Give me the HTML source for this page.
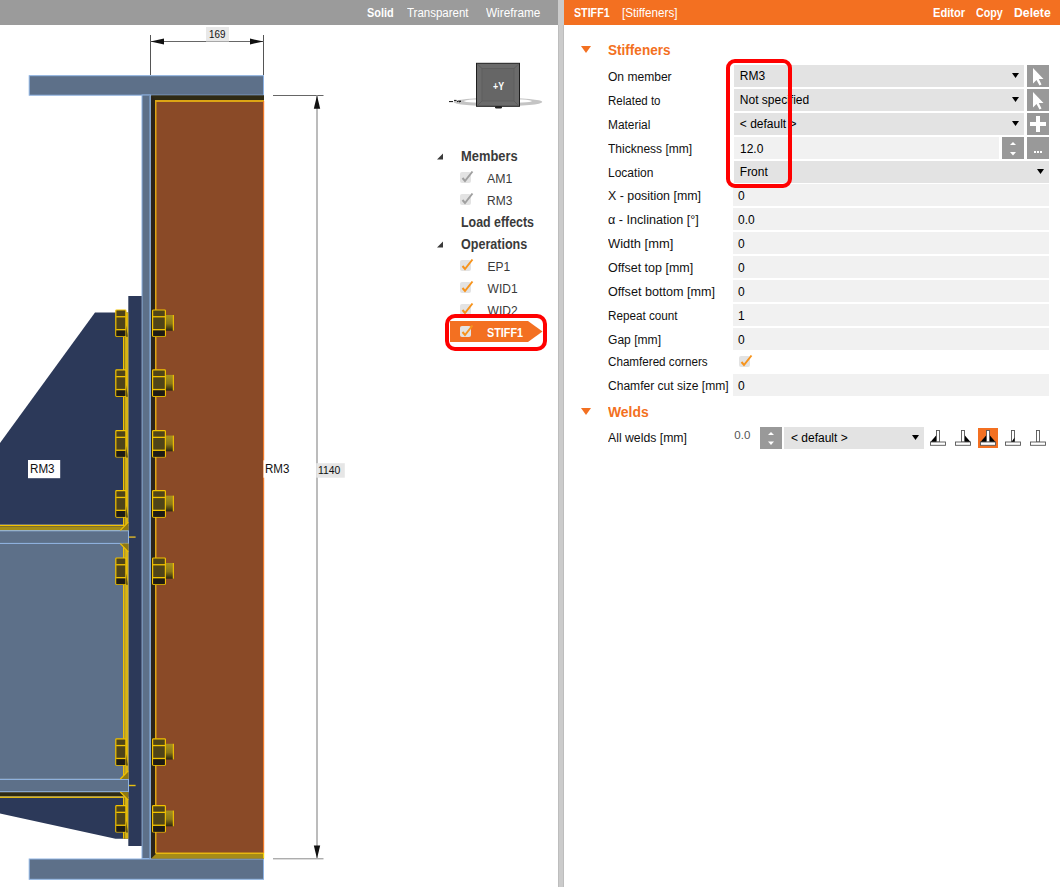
<!DOCTYPE html>
<html><head><meta charset="utf-8">
<style>
*{margin:0;padding:0;box-sizing:border-box}
html,body{width:1060px;height:887px;overflow:hidden;background:#fff;font-family:"Liberation Sans",sans-serif;position:relative}
.a{position:absolute;white-space:nowrap;line-height:1}
</style></head><body>
<svg class="a" style="left:0;top:0" width="558" height="887" viewBox="0 0 558 887"><defs><linearGradient id="shank" x1="0" y1="0" x2="0" y2="1"><stop offset="0" stop-color="#a89220"/><stop offset="0.55" stop-color="#8a7618"/><stop offset="1" stop-color="#2a2410"/></linearGradient></defs><rect x="29.2" y="75.7" width="234.3" height="19.5" fill="#5d7089" stroke="#8db2e2" stroke-width="1"/><rect x="29.2" y="859" width="234.3" height="20.3" fill="#5d7089" stroke="#8db2e2" stroke-width="1"/><rect x="151" y="95.5" width="113" height="763" fill="#2a2419"/><polygon points="151,95.5 264,95.5 264,100.2 156,100.2" fill="#2f2a14"/><rect x="155" y="100" width="109" height="753" fill="#dca514"/><rect x="156.5" y="102" width="107.5" height="750.7" fill="#8a4a27"/><rect x="263" y="101" width="1.2" height="752" fill="#f07a2a"/><polygon points="151.2,858.4 264,858.4 264,853.9 155.8,853.9" fill="#a58b18"/><rect x="155.5" y="852.7" width="108.5" height="1.3" fill="#e8b810"/><rect x="263" y="853" width="1.2" height="5.4" fill="#f5d000"/><rect x="142" y="95" width="8.3" height="763.5" fill="#5d7089" stroke="#8db2e2" stroke-width="1"/><rect x="149" y="95.5" width="1.5" height="763" fill="#7190b6"/><rect x="128.3" y="296" width="13.4" height="550" fill="#2c3959"/><polygon points="95,312.5 128.3,312.5 128.3,524.8 0,524.8 0,443" fill="#2c3959"/><rect x="0" y="526" width="128.3" height="4.5" fill="#a38c16"/><rect x="0" y="526" width="124" height="0.9" fill="#6b6236"/><rect x="0" y="524.9" width="124.3" height="1.2" fill="#f2c200"/><rect x="0" y="543.6" width="124" height="235.3" fill="#5d7089"/><rect x="-1" y="530.8" width="129.5" height="12.6" fill="#5d7089" stroke="#8db2e2" stroke-width="1"/><rect x="-1" y="779.4" width="129.5" height="12.4" fill="#5d7089" stroke="#8db2e2" stroke-width="1"/><polygon points="0,798 128.5,798 128.5,838.7 115.5,838.7 0,813.5" fill="#2c3959"/><rect x="0" y="792.2" width="128.3" height="4.4" fill="#2e2a14"/><rect x="0" y="796.6" width="124.3" height="1.4" fill="#e0b814"/><rect x="125" y="312.5" width="3.3" height="213.5" fill="#d9b514"/><rect x="124.2" y="312.5" width="0.9" height="213.5" fill="#7a6a20"/><rect x="123" y="312.5" width="1.3" height="213.5" fill="#f2c200"/><rect x="125" y="543.6" width="3.3" height="235.29999999999995" fill="#d9b514"/><rect x="124.2" y="543.6" width="0.9" height="235.29999999999995" fill="#7a6a20"/><rect x="123" y="543.6" width="1.3" height="235.29999999999995" fill="#f2c200"/><rect x="125" y="797" width="3.3" height="41.700000000000045" fill="#d9b514"/><rect x="124.2" y="797" width="0.9" height="41.700000000000045" fill="#7a6a20"/><rect x="123" y="797" width="1.3" height="41.700000000000045" fill="#f2c200"/><polygon points="120,530.3 128.3,530.3 128.3,522.0999999999999" fill="#8f7812"/><line x1="120.3" y1="530.3" x2="128.3" y2="522.0999999999999" stroke="#f2c200" stroke-width="1.2"/><polygon points="120,543.6 128.3,543.6 128.3,551.8000000000001" fill="#8f7812"/><line x1="120.3" y1="543.6" x2="128.3" y2="551.8000000000001" stroke="#f2c200" stroke-width="1.2"/><polygon points="120,779 128.3,779 128.3,770.8" fill="#8f7812"/><line x1="120.3" y1="779" x2="128.3" y2="770.8" stroke="#f2c200" stroke-width="1.2"/><polygon points="120,792 128.3,792 128.3,800.2" fill="#8f7812"/><line x1="120.3" y1="792" x2="128.3" y2="800.2" stroke="#f2c200" stroke-width="1.2"/><rect x="129" y="536.3" width="6.6" height="1.6" fill="#c8a830"/><rect x="129" y="784.8" width="6.6" height="1.4" fill="#e8c010"/><rect x="115.8" y="310.0" width="10.100000000000001" height="26.4" rx="0.8" fill="#4f4418" stroke="#f2c200" stroke-width="1.2"/><rect x="116.4" y="330.29999999999995" width="8.9" height="5.9" fill="#1d1b15"/><rect x="116.2" y="316.09999999999997" width="9.3" height="1.3" fill="#f2c200"/><rect x="116.2" y="329.0" width="9.3" height="1.3" fill="#f2c200"/><rect x="152.6" y="310.0" width="12.8" height="26.4" rx="0.8" fill="#4f4418" stroke="#f2c200" stroke-width="1.2"/><rect x="153.2" y="330.29999999999995" width="11.6" height="5.9" fill="#1d1b15"/><rect x="153" y="316.09999999999997" width="12" height="1.3" fill="#f2c200"/><rect x="153" y="329.0" width="12" height="1.3" fill="#f2c200"/><rect x="165.9" y="315.0" width="7.7" height="15.7" fill="url(#shank)"/><rect x="172.8" y="315.0" width="1.1" height="15.7" fill="#f2c200"/><polygon points="126.4,325.4 127.6,336.79999999999995 126.4,336.79999999999995" fill="#1d1b15"/><rect x="115.8" y="369.90000000000003" width="10.100000000000001" height="26.4" rx="0.8" fill="#4f4418" stroke="#f2c200" stroke-width="1.2"/><rect x="116.4" y="390.2" width="8.9" height="5.9" fill="#1d1b15"/><rect x="116.2" y="376.0" width="9.3" height="1.3" fill="#f2c200"/><rect x="116.2" y="388.90000000000003" width="9.3" height="1.3" fill="#f2c200"/><rect x="152.6" y="369.90000000000003" width="12.8" height="26.4" rx="0.8" fill="#4f4418" stroke="#f2c200" stroke-width="1.2"/><rect x="153.2" y="390.2" width="11.6" height="5.9" fill="#1d1b15"/><rect x="153" y="376.0" width="12" height="1.3" fill="#f2c200"/><rect x="153" y="388.90000000000003" width="12" height="1.3" fill="#f2c200"/><rect x="165.9" y="374.90000000000003" width="7.7" height="15.7" fill="url(#shank)"/><rect x="172.8" y="374.90000000000003" width="1.1" height="15.7" fill="#f2c200"/><polygon points="126.4,385.3 127.6,396.7 126.4,396.7" fill="#1d1b15"/><rect x="115.8" y="430.6" width="10.100000000000001" height="26.4" rx="0.8" fill="#4f4418" stroke="#f2c200" stroke-width="1.2"/><rect x="116.4" y="450.9" width="8.9" height="5.9" fill="#1d1b15"/><rect x="116.2" y="436.7" width="9.3" height="1.3" fill="#f2c200"/><rect x="116.2" y="449.6" width="9.3" height="1.3" fill="#f2c200"/><rect x="152.6" y="430.6" width="12.8" height="26.4" rx="0.8" fill="#4f4418" stroke="#f2c200" stroke-width="1.2"/><rect x="153.2" y="450.9" width="11.6" height="5.9" fill="#1d1b15"/><rect x="153" y="436.7" width="12" height="1.3" fill="#f2c200"/><rect x="153" y="449.6" width="12" height="1.3" fill="#f2c200"/><rect x="165.9" y="435.6" width="7.7" height="15.7" fill="url(#shank)"/><rect x="172.8" y="435.6" width="1.1" height="15.7" fill="#f2c200"/><polygon points="126.4,446 127.6,457.4 126.4,457.4" fill="#1d1b15"/><rect x="115.8" y="490.70000000000005" width="10.100000000000001" height="26.4" rx="0.8" fill="#4f4418" stroke="#f2c200" stroke-width="1.2"/><rect x="116.4" y="511.0" width="8.9" height="5.9" fill="#1d1b15"/><rect x="116.2" y="496.8" width="9.3" height="1.3" fill="#f2c200"/><rect x="116.2" y="509.70000000000005" width="9.3" height="1.3" fill="#f2c200"/><rect x="152.6" y="490.70000000000005" width="12.8" height="26.4" rx="0.8" fill="#4f4418" stroke="#f2c200" stroke-width="1.2"/><rect x="153.2" y="511.0" width="11.6" height="5.9" fill="#1d1b15"/><rect x="153" y="496.8" width="12" height="1.3" fill="#f2c200"/><rect x="153" y="509.70000000000005" width="12" height="1.3" fill="#f2c200"/><rect x="165.9" y="495.70000000000005" width="7.7" height="15.7" fill="url(#shank)"/><rect x="172.8" y="495.70000000000005" width="1.1" height="15.7" fill="#f2c200"/><polygon points="126.4,506.1 127.6,517.5 126.4,517.5" fill="#1d1b15"/><rect x="115.8" y="558.0" width="10.100000000000001" height="26.4" rx="0.8" fill="#4f4418" stroke="#f2c200" stroke-width="1.2"/><rect x="116.4" y="578.3" width="8.9" height="5.9" fill="#1d1b15"/><rect x="116.2" y="564.1" width="9.3" height="1.3" fill="#f2c200"/><rect x="116.2" y="577.0" width="9.3" height="1.3" fill="#f2c200"/><rect x="152.6" y="558.0" width="12.8" height="26.4" rx="0.8" fill="#4f4418" stroke="#f2c200" stroke-width="1.2"/><rect x="153.2" y="578.3" width="11.6" height="5.9" fill="#1d1b15"/><rect x="153" y="564.1" width="12" height="1.3" fill="#f2c200"/><rect x="153" y="577.0" width="12" height="1.3" fill="#f2c200"/><rect x="165.9" y="563.0" width="7.7" height="15.7" fill="url(#shank)"/><rect x="172.8" y="563.0" width="1.1" height="15.7" fill="#f2c200"/><polygon points="126.4,573.4 127.6,584.8 126.4,584.8" fill="#1d1b15"/><rect x="115.8" y="738.8000000000001" width="10.100000000000001" height="26.4" rx="0.8" fill="#4f4418" stroke="#f2c200" stroke-width="1.2"/><rect x="116.4" y="759.1" width="8.9" height="5.9" fill="#1d1b15"/><rect x="116.2" y="744.9000000000001" width="9.3" height="1.3" fill="#f2c200"/><rect x="116.2" y="757.8000000000001" width="9.3" height="1.3" fill="#f2c200"/><rect x="152.6" y="738.8000000000001" width="12.8" height="26.4" rx="0.8" fill="#4f4418" stroke="#f2c200" stroke-width="1.2"/><rect x="153.2" y="759.1" width="11.6" height="5.9" fill="#1d1b15"/><rect x="153" y="744.9000000000001" width="12" height="1.3" fill="#f2c200"/><rect x="153" y="757.8000000000001" width="12" height="1.3" fill="#f2c200"/><rect x="165.9" y="743.8000000000001" width="7.7" height="15.7" fill="url(#shank)"/><rect x="172.8" y="743.8000000000001" width="1.1" height="15.7" fill="#f2c200"/><polygon points="126.4,754.2 127.6,765.6 126.4,765.6" fill="#1d1b15"/><rect x="115.8" y="805.6" width="10.100000000000001" height="26.4" rx="0.8" fill="#4f4418" stroke="#f2c200" stroke-width="1.2"/><rect x="116.4" y="825.9" width="8.9" height="5.9" fill="#1d1b15"/><rect x="116.2" y="811.7" width="9.3" height="1.3" fill="#f2c200"/><rect x="116.2" y="824.6" width="9.3" height="1.3" fill="#f2c200"/><rect x="152.6" y="805.6" width="12.8" height="26.4" rx="0.8" fill="#4f4418" stroke="#f2c200" stroke-width="1.2"/><rect x="153.2" y="825.9" width="11.6" height="5.9" fill="#1d1b15"/><rect x="153" y="811.7" width="12" height="1.3" fill="#f2c200"/><rect x="153" y="824.6" width="12" height="1.3" fill="#f2c200"/><rect x="165.9" y="810.6" width="7.7" height="15.7" fill="url(#shank)"/><rect x="172.8" y="810.6" width="1.1" height="15.7" fill="#f2c200"/><polygon points="126.4,821 127.6,832.4 126.4,832.4" fill="#1d1b15"/><line x1="150.5" y1="35" x2="150.5" y2="75" stroke="#555" stroke-width="1"/><line x1="263.5" y1="35" x2="263.5" y2="75" stroke="#555" stroke-width="1"/><line x1="150" y1="41.5" x2="264" y2="41.5" stroke="#666" stroke-width="1"/><polygon points="150.5,41.5 164,38.6 164,44.4" fill="#111"/><polygon points="263.5,41.5 250,38.6 250,44.4" fill="#111"/><rect x="206" y="27" width="23" height="14.4" fill="#e8e8e8"/><line x1="206" y1="41.5" x2="229" y2="41.5" stroke="#a8a8a8" stroke-width="1"/><line x1="273" y1="95.5" x2="323.5" y2="95.5" stroke="#666" stroke-width="1"/><line x1="273" y1="858.8" x2="323.5" y2="858.8" stroke="#8a8a8a" stroke-width="1"/><line x1="317" y1="95.5" x2="317" y2="858.5" stroke="#b5b5b5" stroke-width="1.8"/><polygon points="317,95.5 313.8,108.7 320.2,108.7" fill="#111"/><polygon points="317,858.5 313.8,845.5 320.2,845.5" fill="#111"/><rect x="316.2" y="463.2" width="28.6" height="14.5" fill="#e6e6e6"/><rect x="28" y="460" width="32.2" height="18.2" fill="#fff"/><rect x="263.5" y="460.3" width="28" height="17.4" fill="#fff"/><ellipse cx="497.9" cy="102" rx="44.4" ry="4.4" fill="#c4c4c4"/><ellipse cx="497.9" cy="101.1" rx="34" ry="2.1" fill="#fff"/><path d="M449,101.6 H453 M454,100.4 H456.5 M457,101.8 L458.5,101.2 H461 L459,102" stroke="#111" stroke-width="1" fill="none"/><rect x="476.5" y="63.3" width="43" height="43" fill="#6b6b6b" stroke="#1e1e1e" stroke-width="1"/><rect x="482" y="68.5" width="32" height="32.5" fill="#666" stroke="#5c5c5c" stroke-width="0.8"/><line x1="477" y1="63.8" x2="482" y2="68.5" stroke="#5a5a5a" stroke-width="0.8"/><line x1="519" y1="63.8" x2="514" y2="68.5" stroke="#5a5a5a" stroke-width="0.8"/><line x1="477" y1="106" x2="482" y2="101" stroke="#5a5a5a" stroke-width="0.8"/><line x1="519" y1="106" x2="514" y2="101" stroke="#5a5a5a" stroke-width="0.8"/><rect x="495" y="106" width="7" height="2.5" rx="1.2" fill="#222"/></svg>
<div class="a" style="left:208.7px;top:29px;font-size:11px;color:#111;transform:scaleX(0.894);transform-origin:0 0;">169</div>
<div class="a" style="left:29.5px;top:463px;font-size:12px;color:#111;transform:scaleX(0.971);transform-origin:0 0;">RM3</div>
<div class="a" style="left:264.8px;top:463px;font-size:12px;color:#111;transform:scaleX(0.963);transform-origin:0 0;">RM3</div>
<div class="a" style="left:318.4px;top:465px;font-size:11px;color:#111;transform:scaleX(0.947);transform-origin:0 0;">1140</div>
<div class="a" style="left:493px;top:81px;font-size:11px;font-weight:bold;color:#fff;transform:scaleX(0.799);transform-origin:0 0;">+Y</div>
<div class="a" style="left:0px;top:0px;width:558px;height:25px;background:#9b9b9b;"></div>
<div class="a" style="left:558px;top:0px;width:6px;height:887px;background:#cbcbcb;"></div>
<div class="a" style="left:558px;top:25px;width:1px;height:862px;background:#bdbdbd;"></div>
<div class="a" style="left:563px;top:25px;width:1px;height:862px;background:#bdbdbd;"></div>
<div class="a" style="left:564px;top:0px;width:496px;height:25px;background:#f37021;"></div>
<div class="a" style="left:367px;top:7px;font-size:12px;font-weight:bold;color:#fff;transform:scaleX(0.907);transform-origin:0 0;">Solid</div>
<div class="a" style="left:407.2px;top:7px;font-size:12px;color:#fff;transform:scaleX(0.957);transform-origin:0 0;">Transparent</div>
<div class="a" style="left:486.4px;top:7px;font-size:12px;color:#fff;transform:scaleX(0.981);transform-origin:0 0;">Wireframe</div>
<div class="a" style="left:574.2px;top:7px;font-size:12px;font-weight:bold;color:#fff;transform:scaleX(0.890);transform-origin:0 0;">STIFF1</div>
<div class="a" style="left:621.7px;top:7px;font-size:12px;color:#fff;transform:scaleX(0.971);transform-origin:0 0;">[Stiffeners]</div>
<div class="a" style="left:933.3px;top:7px;font-size:12px;font-weight:bold;color:#fff;transform:scaleX(0.929);transform-origin:0 0;">Editor</div>
<div class="a" style="left:975.9px;top:7px;font-size:12px;font-weight:bold;color:#fff;transform:scaleX(0.893);transform-origin:0 0;">Copy</div>
<div class="a" style="left:1013.8px;top:7px;font-size:12px;font-weight:bold;color:#fff;transform:scaleX(1.019);transform-origin:0 0;">Delete</div>
<svg class="a" style="left:437px;top:152.5px" width="7" height="7"><polygon points="6,0.5 6,6.5 0,6.5" fill="#3a3a3a"/></svg>
<div class="a" style="left:460.7px;top:149px;font-size:14px;font-weight:bold;color:#3a3a3a;transform:scaleX(0.921);transform-origin:0 0;">Members</div>
<svg class="a" style="left:460px;top:170px" width="15" height="14"><rect x="0" y="2" width="11" height="11" rx="2" fill="#e3e3e3"/><polyline points="2.5,8 5,11 12.5,1.5" fill="none" stroke="#a0a0a0" stroke-width="2"/></svg>
<div class="a" style="left:487.3px;top:173px;font-size:12px;color:#3a3a3a;transform:scaleX(1.025);transform-origin:0 0;">AM1</div>
<svg class="a" style="left:460px;top:192px" width="15" height="14"><rect x="0" y="2" width="11" height="11" rx="2" fill="#e3e3e3"/><polyline points="2.5,8 5,11 12.5,1.5" fill="none" stroke="#a0a0a0" stroke-width="2"/></svg>
<div class="a" style="left:487.3px;top:195px;font-size:12px;color:#3a3a3a;transform:scaleX(0.999);transform-origin:0 0;">RM3</div>
<div class="a" style="left:460.7px;top:215px;font-size:14px;font-weight:bold;color:#3a3a3a;transform:scaleX(0.885);transform-origin:0 0;">Load effects</div>
<svg class="a" style="left:437px;top:240.5px" width="7" height="7"><polygon points="6,0.5 6,6.5 0,6.5" fill="#3a3a3a"/></svg>
<div class="a" style="left:460.7px;top:237px;font-size:14px;font-weight:bold;color:#3a3a3a;transform:scaleX(0.896);transform-origin:0 0;">Operations</div>
<svg class="a" style="left:460px;top:258px" width="15" height="14"><rect x="0" y="2" width="11" height="11" rx="2" fill="#e3e3e3"/><polyline points="2.5,8 5,11 12.5,1.5" fill="none" stroke="#f7941d" stroke-width="2"/></svg>
<div class="a" style="left:487.6px;top:261px;font-size:12px;color:#3a3a3a;">EP1</div>
<svg class="a" style="left:460px;top:280px" width="15" height="14"><rect x="0" y="2" width="11" height="11" rx="2" fill="#e3e3e3"/><polyline points="2.5,8 5,11 12.5,1.5" fill="none" stroke="#f7941d" stroke-width="2"/></svg>
<div class="a" style="left:487.6px;top:283px;font-size:12px;color:#3a3a3a;">WID1</div>
<svg class="a" style="left:460px;top:302px" width="15" height="14"><rect x="0" y="2" width="11" height="11" rx="2" fill="#e3e3e3"/><polyline points="2.5,8 5,11 12.5,1.5" fill="none" stroke="#f7941d" stroke-width="2"/></svg>
<div class="a" style="left:487.6px;top:305px;font-size:12px;color:#3a3a3a;">WID2</div>
<svg class="a" style="left:445px;top:314px" width="103" height="38"><polygon points="5,7 83,7 97.5,17.5 83,28 5,28" fill="#f37021"/><rect x="2" y="2" width="98" height="33" rx="8" fill="none" stroke="#ff0000" stroke-width="4"/></svg>
<svg class="a" style="left:460px;top:323.5px" width="15" height="14"><rect x="0" y="2" width="11" height="11" rx="2" fill="#e3e3e3"/><polyline points="2.5,8 5,11 12.5,1.5" fill="none" stroke="#f7941d" stroke-width="2"/></svg>
<div class="a" style="left:487.2px;top:327px;font-size:12px;font-weight:bold;color:#fff;transform:scaleX(0.900);transform-origin:0 0;">STIFF1</div>
<svg class="a" style="left:581px;top:46px" width="10" height="7"><polygon points="0,0 10,0 5,7" fill="#f37021"/></svg>
<div class="a" style="left:608.3px;top:43px;font-size:14px;font-weight:bold;color:#f37021;transform:scaleX(0.968);transform-origin:0 0;">Stiffeners</div>
<div class="a" style="left:608.3px;top:71px;font-size:12px;color:#111;transform:scaleX(1.004);transform-origin:0 0;">On member</div>
<div class="a" style="left:734px;top:65px;width:290px;height:22px;background:#e3e3e3;"></div>
<div class="a" style="left:739.8px;top:70px;font-size:12px;color:#000;">RM3</div>
<svg class="a" style="left:1012px;top:73px" width="7" height="5"><polygon points="0,0 7,0 3.5,5" fill="#000"/></svg>
<div class="a" style="left:1027px;top:65px;width:22px;height:22px;background:#999;"></div>
<svg class="a" style="left:1027px;top:65px" width="22" height="22"><polygon points="6,3 6,18.5 9.5,15 12.5,20.5 14.5,19.5 11.8,14 16.5,14" fill="#fff"/></svg>
<div class="a" style="left:608.3px;top:95px;font-size:12px;color:#111;transform:scaleX(0.960);transform-origin:0 0;">Related to</div>
<div class="a" style="left:734px;top:89px;width:290px;height:22px;background:#e3e3e3;"></div>
<div class="a" style="left:739.8px;top:94px;font-size:12px;color:#000;">Not specified</div>
<svg class="a" style="left:1012px;top:97px" width="7" height="5"><polygon points="0,0 7,0 3.5,5" fill="#000"/></svg>
<div class="a" style="left:1027px;top:89px;width:22px;height:22px;background:#999;"></div>
<svg class="a" style="left:1027px;top:89px" width="22" height="22"><polygon points="6,3 6,18.5 9.5,15 12.5,20.5 14.5,19.5 11.8,14 16.5,14" fill="#fff"/></svg>
<div class="a" style="left:608.3px;top:119px;font-size:12px;color:#111;transform:scaleX(0.991);transform-origin:0 0;">Material</div>
<div class="a" style="left:734px;top:113px;width:290px;height:22px;background:#e3e3e3;"></div>
<div class="a" style="left:739.8px;top:118px;font-size:12px;color:#000;">&lt; default &gt;</div>
<svg class="a" style="left:1012px;top:121px" width="7" height="5"><polygon points="0,0 7,0 3.5,5" fill="#000"/></svg>
<div class="a" style="left:1027px;top:113px;width:22px;height:22px;background:#999;"></div>
<div class="a" style="left:1030px;top:122px;width:16px;height:4px;background:#fff;"></div>
<div class="a" style="left:1036px;top:116px;width:4px;height:16px;background:#fff;"></div>
<div class="a" style="left:608.3px;top:143px;font-size:12px;color:#111;transform:scaleX(1.001);transform-origin:0 0;">Thickness [mm]</div>
<div class="a" style="left:734px;top:137px;width:265px;height:22px;background:#f1f1f1;"></div>
<div class="a" style="left:740px;top:143px;font-size:12px;color:#000;">12.0</div>
<div class="a" style="left:1002px;top:137px;width:22px;height:22px;background:#999;"></div>
<svg class="a" style="left:1002px;top:137px" width="22" height="22"><polygon points="8,8 14,8 11,5" fill="#fff"/><polygon points="8,15 14,15 11,18.5" fill="#fff"/></svg>
<div class="a" style="left:1027px;top:137px;width:22px;height:22px;background:#999;"></div>
<div class="a" style="left:1034px;top:151px;width:1.7px;height:1.8px;background:#fff;"></div>
<div class="a" style="left:1037.2px;top:151px;width:1.7px;height:1.8px;background:#fff;"></div>
<div class="a" style="left:1040.4px;top:151px;width:1.7px;height:1.8px;background:#fff;"></div>
<div class="a" style="left:608.3px;top:167px;font-size:12px;color:#111;transform:scaleX(1.001);transform-origin:0 0;">Location</div>
<div class="a" style="left:734px;top:161px;width:315px;height:22px;background:#e3e3e3;"></div>
<div class="a" style="left:739.8px;top:166px;font-size:12px;color:#000;">Front</div>
<svg class="a" style="left:1037px;top:169px" width="7" height="5"><polygon points="0,0 7,0 3.5,5" fill="#000"/></svg>
<div class="a" style="left:608.3px;top:190px;font-size:12px;color:#111;transform:scaleX(1.033);transform-origin:0 0;">X - position [mm]</div>
<div class="a" style="left:733px;top:184px;width:316px;height:22px;background:#f1f1f1;"></div>
<div class="a" style="left:738px;top:190px;font-size:12px;color:#000;">0</div>
<div class="a" style="left:608.3px;top:214px;font-size:12px;color:#111;transform:scaleX(1.051);transform-origin:0 0;">α - Inclination [°]</div>
<div class="a" style="left:733px;top:208px;width:316px;height:22px;background:#f1f1f1;"></div>
<div class="a" style="left:738px;top:214px;font-size:12px;color:#000;">0.0</div>
<div class="a" style="left:608.3px;top:238px;font-size:12px;color:#111;transform:scaleX(1.075);transform-origin:0 0;">Width [mm]</div>
<div class="a" style="left:733px;top:232px;width:316px;height:22px;background:#f1f1f1;"></div>
<div class="a" style="left:738px;top:238px;font-size:12px;color:#000;">0</div>
<div class="a" style="left:608.3px;top:262px;font-size:12px;color:#111;transform:scaleX(1.042);transform-origin:0 0;">Offset top [mm]</div>
<div class="a" style="left:733px;top:256px;width:316px;height:22px;background:#f1f1f1;"></div>
<div class="a" style="left:738px;top:262px;font-size:12px;color:#000;">0</div>
<div class="a" style="left:608.3px;top:286px;font-size:12px;color:#111;transform:scaleX(1.051);transform-origin:0 0;">Offset bottom [mm]</div>
<div class="a" style="left:733px;top:280px;width:316px;height:22px;background:#f1f1f1;"></div>
<div class="a" style="left:738px;top:286px;font-size:12px;color:#000;">0</div>
<div class="a" style="left:608.3px;top:310px;font-size:12px;color:#111;transform:scaleX(0.975);transform-origin:0 0;">Repeat count</div>
<div class="a" style="left:733px;top:304px;width:316px;height:22px;background:#f1f1f1;"></div>
<div class="a" style="left:738px;top:310px;font-size:12px;color:#000;">1</div>
<div class="a" style="left:608.3px;top:334px;font-size:12px;color:#111;transform:scaleX(1.006);transform-origin:0 0;">Gap [mm]</div>
<div class="a" style="left:733px;top:328px;width:316px;height:22px;background:#f1f1f1;"></div>
<div class="a" style="left:738px;top:334px;font-size:12px;color:#000;">0</div>
<div class="a" style="left:608.3px;top:356px;font-size:12px;color:#111;transform:scaleX(0.970);transform-origin:0 0;">Chamfered corners</div>
<svg class="a" style="left:739px;top:354px" width="15" height="14"><rect x="0" y="2" width="11" height="11" rx="2" fill="#e3e3e3"/><polyline points="2.5,8 5,11 12.5,1.5" fill="none" stroke="#f7941d" stroke-width="2"/></svg>
<div class="a" style="left:608.3px;top:380px;font-size:12px;color:#111;transform:scaleX(1.005);transform-origin:0 0;">Chamfer cut size [mm]</div>
<div class="a" style="left:733px;top:374px;width:316px;height:22px;background:#f1f1f1;"></div>
<div class="a" style="left:738px;top:380px;font-size:12px;color:#000;">0</div>
<div class="a" style="left:726px;top:59px;width:66px;height:129px;border:4px solid #ff0000;border-radius:9px"></div>
<svg class="a" style="left:581.4px;top:408px" width="10" height="7"><polygon points="0,0 10,0 5,7" fill="#f37021"/></svg>
<div class="a" style="left:608.3px;top:405px;font-size:14px;font-weight:bold;color:#f37021;transform:scaleX(0.993);transform-origin:0 0;">Welds</div>
<div class="a" style="left:608.3px;top:432px;font-size:12px;color:#111;transform:scaleX(1.021);transform-origin:0 0;">All welds [mm]</div>
<div class="a" style="left:734.3px;top:430px;font-size:11.5px;color:#555;">0.0</div>
<div class="a" style="left:760px;top:427px;width:22px;height:21.5px;background:#999;"></div>
<svg class="a" style="left:760px;top:427px" width="22" height="22"><polygon points="8,8 14,8 11,5" fill="#fff"/><polygon points="8,14.5 14,14.5 11,18" fill="#fff"/></svg>
<div class="a" style="left:784px;top:427px;width:140px;height:21.5px;background:#e3e3e3;"></div>
<div class="a" style="left:791px;top:432px;font-size:12px;color:#000;">&lt; default &gt;</div>
<svg class="a" style="left:912.3px;top:435px" width="7" height="5"><polygon points="0,0 7,0 3.5,5" fill="#000"/></svg>
<svg class="a" style="left:928px;top:428px" width="20" height="20"><g transform="translate(2,2)"><polygon points="0.5,12 6.5,12 6.5,5" fill="#000"/><rect x="6.5" y="0.5" width="3" height="11.5" fill="#fff" stroke="#555" stroke-width="0.9"/><rect x="0.5" y="12" width="15" height="3.3" fill="#fff" stroke="#555" stroke-width="0.9"/></g></svg>
<svg class="a" style="left:953px;top:428px" width="20" height="20"><g transform="translate(2,2)"><polygon points="15.5,12 9.5,12 9.5,5" fill="#000"/><rect x="6.5" y="0.5" width="3" height="11.5" fill="#fff" stroke="#555" stroke-width="0.9"/><rect x="0.5" y="12" width="15" height="3.3" fill="#fff" stroke="#555" stroke-width="0.9"/></g></svg>
<div class="a" style="left:978px;top:427.7px;width:20px;height:20.1px;background:#f37021;"></div>
<svg class="a" style="left:978px;top:428px" width="20" height="20"><g transform="translate(2,2)"><polygon points="0.5,12 6.5,12 6.5,5" fill="#000"/><polygon points="15.5,12 9.5,12 9.5,5" fill="#000"/><rect x="6.5" y="0.5" width="3" height="11.5" fill="#fff" stroke="#555" stroke-width="0.9"/><rect x="0.5" y="12" width="15" height="3.3" fill="#fff" stroke="#555" stroke-width="0.9"/></g></svg>
<svg class="a" style="left:1003px;top:428px" width="20" height="20"><g transform="translate(2,2)"><rect x="6.5" y="0.5" width="3" height="11.5" fill="#fff" stroke="#555" stroke-width="0.9"/><path d="M6.3,12 L9.5,12 L9.5,7.5 Q8,10 6.3,12Z" fill="#000"/><rect x="0.5" y="12" width="15" height="3.3" fill="#fff" stroke="#555" stroke-width="0.9"/></g></svg>
<svg class="a" style="left:1028px;top:428px" width="20" height="20"><g transform="translate(2,2)"><rect x="6.5" y="0.5" width="3" height="11.5" fill="#fff" stroke="#555" stroke-width="0.9"/><rect x="0.5" y="12" width="15" height="3.3" fill="#fff" stroke="#555" stroke-width="0.9"/></g></svg>
</body></html>
